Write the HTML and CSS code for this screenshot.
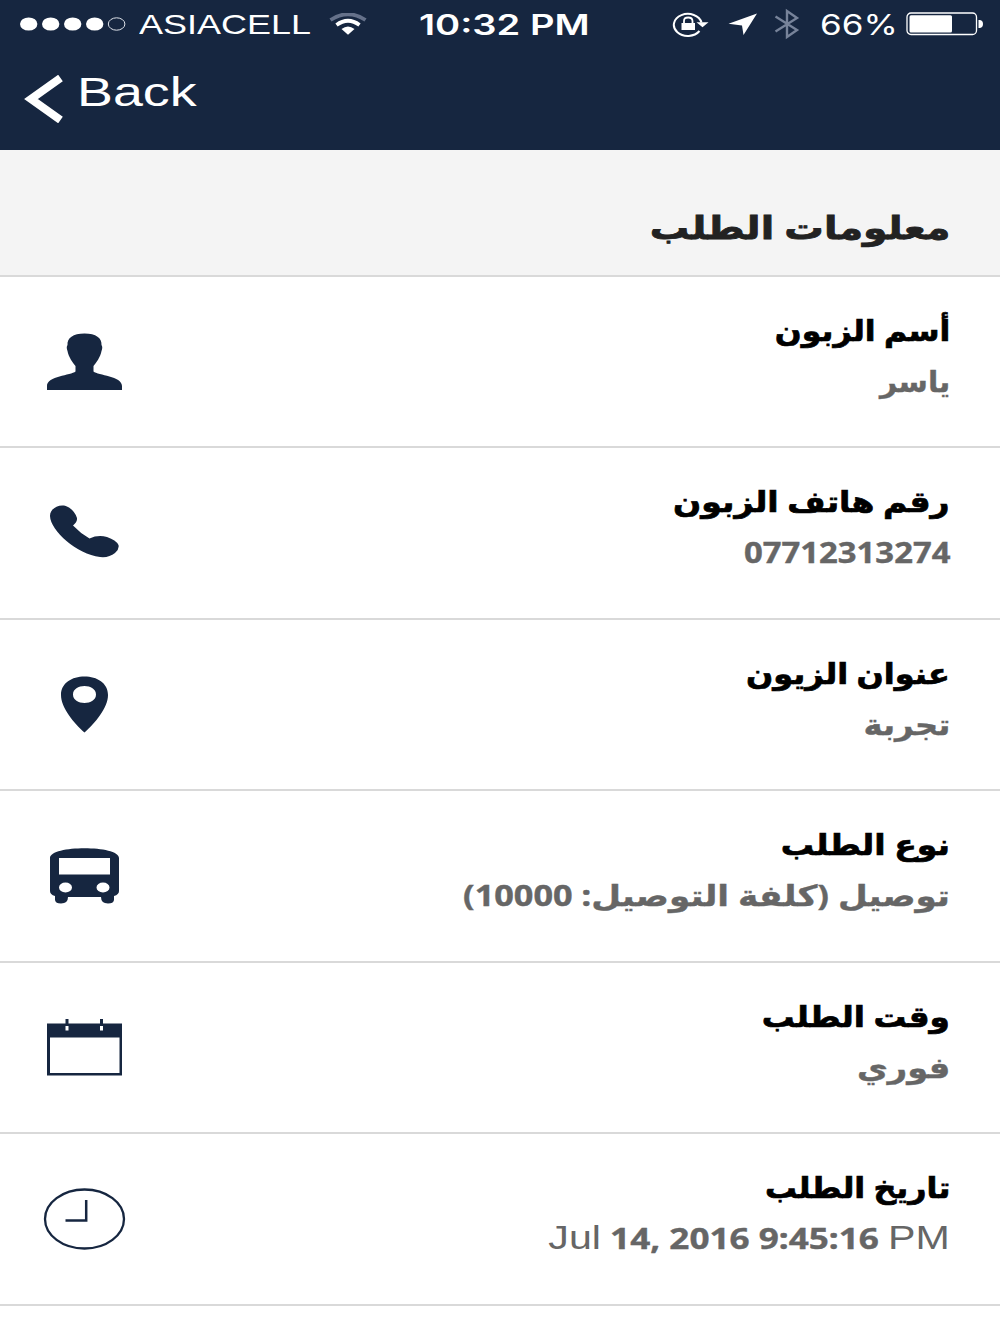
FILE: index.html
```html
<!DOCTYPE html>
<html lang="ar">
<head>
<meta charset="utf-8">
<title>معلومات الطلب</title>
<link rel="stylesheet" href="styles.css">
</head>
<body>
<header class="top">
  <div class="status">
    <svg class="signal" width="106" height="14" viewBox="0 0 106 14" fill="#fff"><ellipse cx="8.7" cy="7" rx="8.7" ry="6.6"/><ellipse cx="30.7" cy="7" rx="8.7" ry="6.6"/><ellipse cx="52.7" cy="7" rx="8.7" ry="6.6"/><ellipse cx="74.7" cy="7" rx="8.7" ry="6.6"/><ellipse cx="96.6" cy="7" rx="8.3" ry="6.2" fill="none" stroke="#dfe3ea"/></svg>
    <span class="carrier"><span class="wide">ASIACELL</span></span>
    <svg class="wifi" width="38" height="22" viewBox="0 0 38 22" fill="none"><path d="M1.500 7Q19-4.500 36.500 7" stroke="#65718a" stroke-width="3.800"/><path d="M7.500 12Q19 3.500 30.500 12" stroke="#fff" stroke-width="3.800"/><path d="M12.500 16Q19 11 25.500 16L19 21.800Z" fill="#fff"/></svg>
    <span class="clock"><span class="wide">10:32 PM</span></span>
    <svg class="lock" width="38" height="26" viewBox="0 0 38 26" fill="none" stroke="#fff"><path d="M27.500 20A14 11 0 1 1 29.500 11.500" stroke-width="2"/><path d="M24.500 11.300H36.500L30.500 16.300Z" fill="#fff" stroke="none"/><path d="M9.500 12H23V19H9.500Z" fill="#fff" stroke="none"/><path d="M12 12V10Q12 6.500 16.200 6.500T20.500 10V12" stroke-width="1.800"/></svg>
    <svg class="arrow" width="30" height="22" viewBox="0 0 30 22"><path d="M29 .5L15.500 22L14 12.500L.5 10.700Z" fill="#fff"/></svg>
    <svg class="bluetooth" width="26" height="32" viewBox="0 0 26 32"><path d="M1.500 8.500L23 22L13 29V3L23 10L1.500 23.500" fill="none" stroke="#77839a" stroke-width="2.400"/></svg>
    <span class="percent"><span class="wide">66%</span></span>
    <svg class="battery" width="78" height="24" viewBox="0 0 78 24"><rect x="1" y="1" width="69.500" height="21.500" rx="4" fill="none" stroke="#fff" stroke-width="1.300"/><rect x="3.500" y="3.200" width="42.500" height="17.200" rx="1.500" fill="#fff"/><path d="M72.500 8H74Q77 8.500 77 12T74 16H72.500Z" fill="#fff"/></svg>
  </div>
  <nav class="nav">
    <svg width="39" height="48" viewBox="0 0 39 48"><path d="M36.500 3L7 24L36.500 45" fill="none" stroke="#fff" stroke-width="8"/></svg>
    <span class="back wide">Back</span>
  </nav>
</header>
<h1 class="section"><span class="fit t-section">معلومات الطلب</span></h1>
<main>
  <section class="row">
    <svg class="icon" width="90" height="70" viewBox="0 0 90 70" fill="#162640"><path d="M44.500 6.500C56 6.500 62 11 61.500 18Q63 20 61.500 24C60.500 30 56 36 53.500 39V44.500C58 48.500 82 49 82 59V63H7V59C7 49 31 48.500 35.500 44.500V39C33 36 28.500 30 27.500 24Q26 20 27.500 18C27 11 33 6.500 44.500 6.500Z"/></svg>
    <div class="text"><h2 class="fit t1">أسم الزبون</h2><p class="fit v1">ياسر</p></div>
  </section>
  <section class="row">
    <svg class="icon" width="90" height="70" viewBox="0 0 90 70" fill="#162640"><path d="M10 18C10 9 22 4.500 29 9.500Q35 13.500 37 20Q37.500 24 33 27.500Q40 35 49.500 40.500Q58 36.500 67 39Q76 42 78.500 47Q79.500 51 75 55Q69 60 60 59C37 56 10.500 33 10 18Z"/></svg>
    <div class="text"><h2 class="fit t2">رقم هاتف الزبون</h2><p class="fit v2">07712313274</p></div>
  </section>
  <section class="row">
    <svg class="icon" width="90" height="70" viewBox="0 0 90 70" fill="#162640"><path fill-rule="evenodd" d="M44.500 6.500C57 6.500 68 13 68 25C68 38 55 53 44.500 62.500C34 53 21 38 21 25C21 13 32 6.500 44.500 6.500ZM44.500 16C38.500 16 33 19 33 24.500S38.500 33 44.500 33S56 30 56 24.500S50.500 16 44.500 16Z"/></svg>
    <div class="text"><h2 class="fit t3">عنوان الزيون</h2><p class="fit v3">تجربة</p></div>
  </section>
  <section class="row">
    <svg class="icon" width="90" height="70" viewBox="0 0 90 70" fill="#162640"><path fill-rule="evenodd" d="M10 17C10 4 79 4 79 17V50Q79 53.500 74 55V59Q73.500 62.500 68 62.500Q61 62.500 61 56H28Q28 62.500 21 62.500Q15.500 62.500 15 59V55Q10 53.500 10 50ZM19 17V33.500H70V17ZM25.500 41.500A6.500 5 0 1 0 25.500 51.500A6.500 5 0 1 0 25.500 41.500ZM63 41.500A6.500 5 0 1 0 63 51.500A6.500 5 0 1 0 63 41.500Z"/></svg>
    <div class="text"><h2 class="fit t4">نوع الطلب</h2><p class="fit v4">توصيل (كلفة التوصيل: 10000)</p></div>
  </section>
  <section class="row">
    <svg class="icon" width="90" height="70" viewBox="0 0 90 70" fill="#162640"><path fill-rule="evenodd" d="M7 10.500H25.500V6H28.500V10.500H60V6H63V10.500H82V62.500H7ZM10 24.500V60H79.500V24.500ZM25.500 13V17.500H28.500V13ZM60 13V17.500H63V13Z"/></svg>
    <div class="text"><h2 class="fit t5">وقت الطلب</h2><p class="fit v5">فوري</p></div>
  </section>
  <section class="row">
    <svg class="icon" width="90" height="70" viewBox="0 0 90 70" fill="none" stroke="#162640"><ellipse cx="44.500" cy="35" rx="39.500" ry="29.500" stroke-width="2.300"/><path d="M46.200 16V36.500H25.500" stroke-width="2.500"/></svg>
    <div class="text"><h2 class="fit t6">تاريخ الطلب</h2><p class="fit v6" dir="ltr"><span class="thin">Jul</span> 14, 2016 9:45:16 <span class="thin">PM</span></p></div>
  </section>
</main>
</body>
</html>
```
FILE: styles.css
```css
* { box-sizing: border-box; }
body { margin: 0; background: #fff; height: 1334px; overflow: hidden; }
svg { display: block; flex: none; }
.top { height: 150px; background: #162640; color: #fff; font-family: "Liberation Sans", Arial, sans-serif; }
.status { height: 48px; display: flex; align-items: center; padding-left: 20px; }
.wide { display: inline-block; white-space: nowrap; transform-origin: left center; }
.carrier, .clock, .percent { flex: none; padding-top: 2px; }
.carrier { width: 172px; margin-left: 13px; font-size: 28px; }
.carrier .wide { transform: scaleX(1.285); }
.wifi { margin-left: 18px; }
.clock { width: 172px; margin-left: 52px; font: 600 28px Inter, sans-serif; }
.clock .wide { transform: scaleX(1.36); }
.lock { margin-left: 81px; }
.arrow { margin-left: 18px; }
.bluetooth { margin-left: 16px; }
.percent { width: 76px; margin-left: 20px; font: 28px Inter, sans-serif; }
.percent .wide { transform: scaleX(1.25); }
.battery { margin-left: 10px; }
.nav { display: flex; align-items: flex-start; padding: 27px 0 0 24px; }
.back { margin: -8px 0 0 14px; font-size: 40px; line-height: 50px; transform: scaleX(1.345); }
.section { height: 126.5px; margin: 0; padding: 52px 50px 0; background: #f4f4f4; border-bottom: 2px solid #d9d9d9; color: #222; font: bold 32px/50px "Noto Sans", "DejaVu Sans", sans-serif; text-align: right; direction: rtl; -webkit-text-stroke: 0.8px; }
.fit { display: block; width: max-content; white-space: nowrap; transform-origin: right center; }
.row { height: 171.5px; border-bottom: 2px solid #d9d9d9; padding: 50px 50px 0 40px; display: flex; justify-content: space-between; }
.text { direction: rtl; margin-top: -23px; font-family: "Noto Sans", "DejaVu Sans", sans-serif; }
.text h2, .text p { margin: 0; height: 51px; font-size: 29px; line-height: 51px; font-weight: bold; }
.text h2 { color: #000; -webkit-text-stroke: 0.7px; }
.text p { color: #666; -webkit-text-stroke: 0.4px; }
.text .thin { font: 34px "Liberation Sans", Arial, sans-serif; -webkit-text-stroke: 0; }

/* horizontal stretch of each line */
.t-section { transform: scaleX(1.23); }
.t1 { transform: scaleX(1.0875); }
.v1 { transform: scaleX(1.03); }
.t2 { transform: scaleX(1.14); }
.v2 { transform: scaleX(1.132); }
.t3 { transform: scaleX(1.103); }
.v3 { transform: scaleX(1.11); }
.t4 { transform: scaleX(1.143); }
.v4 { transform: scaleX(1.182); }
.t5 { transform: scaleX(1.127); }
.v5 { transform: scaleX(1.163); }
.t6 { transform: scaleX(1.095); }
.v6 { transform: scaleX(1.21); }
```
